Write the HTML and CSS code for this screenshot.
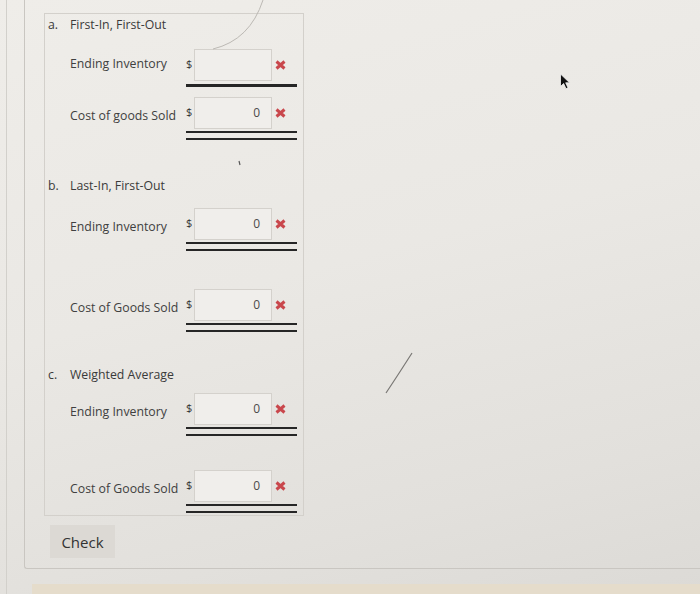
FILE: index.html
```html
<!DOCTYPE html>
<html>
<head>
<meta charset="utf-8">
<link rel="stylesheet" href="styles.css">
</head>
<body>
<div class="page">
  <div class="card">
    <div class="panel">
      <div class="heading"><span class="marker">a.</span><span>First-In, First-Out</span></div>
      <div class="row row-a1">
        <div class="label label-first">Ending Inventory</div>
        <div class="field">
          <div class="entry"><span class="cur">$</span><span class="box"></span><svg class="mark" viewBox="0 0 11 10" width="11" height="10"><path d="M1.5 1.5 L9.5 8.5 M9.5 1.5 L1.5 8.5"/></svg></div>
          <div class="rule single"></div>
        </div>
      </div>
      <div class="row row-a2">
        <div class="label">Cost of goods Sold</div>
        <div class="field">
          <div class="entry"><span class="cur">$</span><span class="box">0</span><svg class="mark" viewBox="0 0 11 10" width="11" height="10"><path d="M1.5 1.5 L9.5 8.5 M9.5 1.5 L1.5 8.5"/></svg></div>
          <div class="rule double"></div>
        </div>
      </div>

      <div class="heading heading-b"><span class="marker">b.</span><span>Last-In, First-Out</span></div>
      <div class="row row-b1">
        <div class="label">Ending Inventory</div>
        <div class="field">
          <div class="entry"><span class="cur">$</span><span class="box">0</span><svg class="mark" viewBox="0 0 11 10" width="11" height="10"><path d="M1.5 1.5 L9.5 8.5 M9.5 1.5 L1.5 8.5"/></svg></div>
          <div class="rule double"></div>
        </div>
      </div>
      <div class="row row-b2">
        <div class="label">Cost of Goods Sold</div>
        <div class="field">
          <div class="entry"><span class="cur">$</span><span class="box">0</span><svg class="mark" viewBox="0 0 11 10" width="11" height="10"><path d="M1.5 1.5 L9.5 8.5 M9.5 1.5 L1.5 8.5"/></svg></div>
          <div class="rule double"></div>
        </div>
      </div>

      <div class="heading heading-c"><span class="marker">c.</span><span>Weighted Average</span></div>
      <div class="row row-c1">
        <div class="label">Ending Inventory</div>
        <div class="field">
          <div class="entry"><span class="cur">$</span><span class="box">0</span><svg class="mark" viewBox="0 0 11 10" width="11" height="10"><path d="M1.5 1.5 L9.5 8.5 M9.5 1.5 L1.5 8.5"/></svg></div>
          <div class="rule double"></div>
        </div>
      </div>
      <div class="row row-c2">
        <div class="label">Cost of Goods Sold</div>
        <div class="field">
          <div class="entry"><span class="cur">$</span><span class="box">0</span><svg class="mark" viewBox="0 0 11 10" width="11" height="10"><path d="M1.5 1.5 L9.5 8.5 M9.5 1.5 L1.5 8.5"/></svg></div>
          <div class="rule double"></div>
        </div>
      </div>
    </div>
    <button class="check">Check</button>
  </div>
  <div class="band"></div>

  <svg class="marks-overlay" viewBox="0 0 700 594" width="700" height="594">
    <path class="scratch" d="M213 49 Q250 40 263 0"/>
    <path class="slash" d="M386 393 Q398 375 412 353"/>
    <path class="tick" d="M239 161 L240 165"/>
  </svg>
  <svg class="cursor" viewBox="0 0 10 16" width="10" height="17"><path d="M0.5 0.5 L0.5 13 L3.6 10 L6 15.2 L8 14.3 L5.7 9.3 L9.6 9.3 Z"/></svg>
</div>
</body>
</html>
```
FILE: styles.css
```css
html, body {
  margin: 0;
  padding: 0;
}
body {
  width: 700px;
  height: 594px;
  overflow: hidden;
  background: linear-gradient(165deg, #efede9 0%, #eae8e4 45%, #e2e0dc 80%, #dcdad6 100%);
  font-family: "Open Sans", "Liberation Sans", sans-serif;
  color: #3b3b3b;
}
.page {
  position: relative;
  width: 700px;
  height: 594px;
  border-left: 1px solid #d2d0cb;
  margin-left: 6px;
}
.card {
  margin-left: 17px;
  border-left: 1px solid #c9c6c1;
  border-bottom: 1px solid #c9c6c1;
  border-bottom-left-radius: 3px;
  padding: 13px 0 10px 19px;
}
.panel {
  width: 255px;
  border: 1px solid #d3d0cb;
  padding: 1px 3px 2px 0;
}
.heading {
  display: flex;
  margin-top: 1px;
  padding-left: 3px;
  font-size: 12.3px;
  line-height: 18px;
  color: #3a3a3a;
}
.marker {
  width: 22px;
}
.heading-b { margin-top: 37px; }
.heading-c { margin-top: 34px; }
.row {
  display: grid;
  grid-template-columns: 141px 111px;
}
.row-a1 { margin-top: 15px; }
.row-a2 { margin-top: 10px; }
.row-b1 { margin-top: 13px; }
.row-b2 { margin-top: 38px; }
.row-c1 { margin-top: 9px; }
.row-c2 { margin-top: 34px; }
.label {
  padding-left: 25px;
  padding-top: 10px;
  font-size: 12.3px;
  line-height: 18px;
  color: #404040;
  white-space: nowrap;
}
.label-first { padding-top: 6px; }
.field {
  display: flex;
  flex-direction: column;
}
.entry {
  display: flex;
  height: 32px;
}
.cur {
  width: 8px;
  padding-top: 9px;
  font-size: 11px;
  line-height: 12px;
  color: #333;
}
.box {
  box-sizing: border-box;
  width: 78px;
  height: 32px;
  border: 1px solid #d4d1cc;
  background: #f0eeeb;
  text-align: right;
  padding-right: 11px;
  font-size: 12px;
  line-height: 30px;
  color: #4a4a4a;
}
.mark {
  align-self: center;
  margin-left: 3px;
}
.mark path {
  stroke: #c9474c;
  stroke-width: 3;
  fill: none;
}
.rule.single {
  margin-top: 3px;
  height: 3px;
  background: #262626;
}
.rule.double {
  margin-top: 2px;
  height: 5px;
  border-top: 2px solid #262626;
  border-bottom: 2px solid #262626;
}
.check {
  display: block;
  margin: 9px 0 0 6px;
  width: 65px;
  height: 33px;
  padding: 0;
  border: none;
  background: #dcd9d4;
  font-family: "Open Sans", "Liberation Sans", sans-serif;
  font-size: 15px;
  color: #333;
}
.band {
  margin: 15px 0 0 25px;
  height: 12px;
  background: #e5dccb;
}
.marks-overlay {
  position: absolute;
  left: -7px;
  top: 0;
  pointer-events: none;
}
.scratch {
  fill: none;
  stroke: #bcb9b4;
  stroke-width: 1;
}
.slash {
  fill: none;
  stroke: #7a7875;
  stroke-width: 1.2;
}
.tick {
  stroke: #555;
  stroke-width: 1.2;
}
.cursor {
  position: absolute;
  left: 553px;
  top: 73px;
}
.cursor path {
  fill: #111;
  stroke: #f4f4f4;
  stroke-width: 0.8;
}
```
